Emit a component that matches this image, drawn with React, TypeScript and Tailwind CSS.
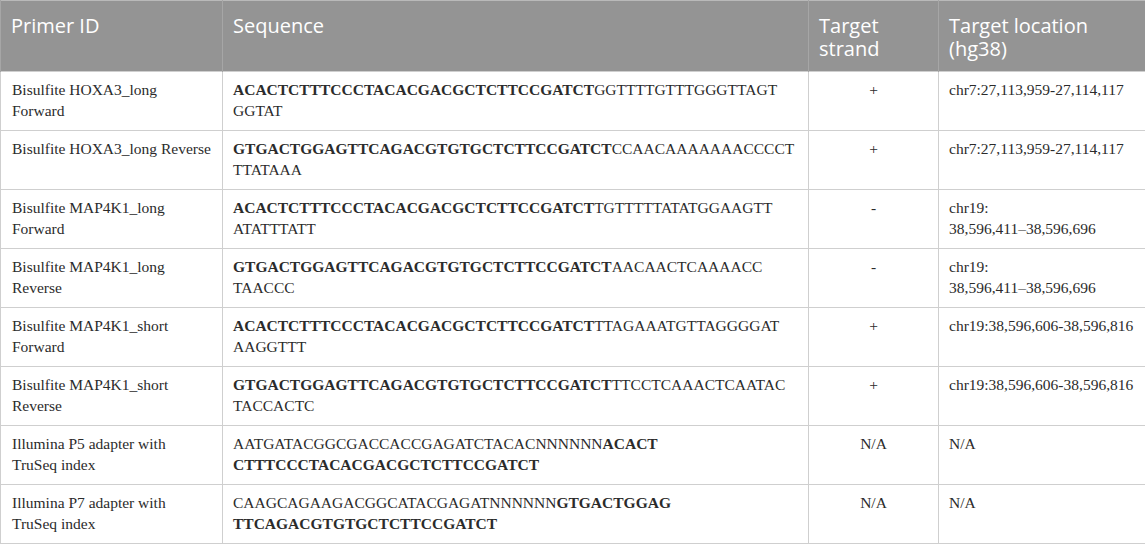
import React from "react";

type Seg = { t: string; b?: boolean };
type Row = {
  id: string[];
  seq: Seg[][];
  strand: string;
  loc: string[];
};

const rows: Row[] = [
  {
    id: ["Bisulfite HOXA3_long", "Forward"],
    seq: [
      [{ t: "ACACTCTTTCCCTACACGACGCTCTTCCGATCT", b: true }, { t: "GGTTTTGTTTGGGTTAGT" }],
      [{ t: "GGTAT" }],
    ],
    strand: "+",
    loc: ["chr7:27,113,959-27,114,117"],
  },
  {
    id: ["Bisulfite HOXA3_long Reverse"],
    seq: [
      [{ t: "GTGACTGGAGTTCAGACGTGTGCTCTTCCGATCT", b: true }, { t: "CCAACAAAAAAACCCCT" }],
      [{ t: "TTATAAA" }],
    ],
    strand: "+",
    loc: ["chr7:27,113,959-27,114,117"],
  },
  {
    id: ["Bisulfite MAP4K1_long", "Forward"],
    seq: [
      [{ t: "ACACTCTTTCCCTACACGACGCTCTTCCGATCT", b: true }, { t: "TGTTTTTATATGGAAGTT" }],
      [{ t: "ATATTTATT" }],
    ],
    strand: "-",
    loc: ["chr19:", "38,596,411–38,596,696"],
  },
  {
    id: ["Bisulfite MAP4K1_long", "Reverse"],
    seq: [
      [{ t: "GTGACTGGAGTTCAGACGTGTGCTCTTCCGATCT", b: true }, { t: "AACAACTCAAAACC" }],
      [{ t: "TAACCC" }],
    ],
    strand: "-",
    loc: ["chr19:", "38,596,411–38,596,696"],
  },
  {
    id: ["Bisulfite MAP4K1_short", "Forward"],
    seq: [
      [{ t: "ACACTCTTTCCCTACACGACGCTCTTCCGATCT", b: true }, { t: "TTAGAAATGTTAGGGGAT" }],
      [{ t: "AAGGTTT" }],
    ],
    strand: "+",
    loc: ["chr19:38,596,606-38,596,816"],
  },
  {
    id: ["Bisulfite MAP4K1_short", "Reverse"],
    seq: [
      [{ t: "GTGACTGGAGTTCAGACGTGTGCTCTTCCGATCT", b: true }, { t: "TTCCTCAAACTCAATAC" }],
      [{ t: "TACCACTC" }],
    ],
    strand: "+",
    loc: ["chr19:38,596,606-38,596,816"],
  },
  {
    id: ["Illumina P5 adapter with", "TruSeq index"],
    seq: [
      [{ t: "AATGATACGGCGACCACCGAGATCTACACNNNNNN" }, { t: "ACACT", b: true }],
      [{ t: "CTTTCCCTACACGACGCTCTTCCGATCT", b: true }],
    ],
    strand: "N/A",
    loc: ["N/A"],
  },
  {
    id: ["Illumina P7 adapter with", "TruSeq index"],
    seq: [
      [{ t: "CAAGCAGAAGACGGCATACGAGATNNNNNN" }, { t: "GTGACTGGAG", b: true }],
      [{ t: "TTCAGACGTGTGCTCTTCCGATCT", b: true }],
    ],
    strand: "N/A",
    loc: ["N/A"],
  },
];

const headers = ["Primer ID", "Sequence", "Target\nstrand", "Target location\n(hg38)"];

export default function App() {
  return (
    <div className="w-[1145px] h-[545px] bg-white overflow-hidden">
      <table className="w-[1145px] table-fixed border-collapse border border-[#b9b9b9]">
        <colgroup>
          <col className="w-[222px]" />
          <col className="w-[586px]" />
          <col className="w-[130px]" />
          <col className="w-[207px]" />
        </colgroup>
        <thead>
          <tr className="h-[71px] bg-[#949494]">
            {headers.map((h, i) => (
              <th
                key={i}
                className="align-top text-left font-normal text-white text-[20px] leading-[23px] px-[10px] pt-[13px] whitespace-pre-line border-l border-r border-[#a6a6a6] font-[family-name:'Open_Sans',sans-serif]"
              >
                {h}
              </th>
            ))}
          </tr>
        </thead>
        <tbody className="font-[family-name:'Liberation_Serif',serif] text-[15.5px] leading-[21px] text-[#2b2b2b]">
          {rows.map((r, i) => (
            <tr key={i} className="h-[59px]">
              <td className="align-top px-[11px] pt-[7px] pb-[9px] border border-[#cfcfcf]">
                {r.id.map((l, j) => (
                  <div key={j} className="whitespace-nowrap">
                    {l}
                  </div>
                ))}
              </td>
              <td className="align-top px-[10px] pt-[7px] pb-[9px] border border-[#cfcfcf]">
                {r.seq.map((line, j) => (
                  <div key={j} className="whitespace-nowrap">
                    {line.map((s, k) =>
                      s.b ? (
                        <b key={k} className="font-bold">
                          {s.t}
                        </b>
                      ) : (
                        <span key={k}>{s.t}</span>
                      )
                    )}
                  </div>
                ))}
              </td>
              <td className="align-top text-center px-[10px] pt-[7px] pb-[9px] border border-[#cfcfcf]">
                {r.strand}
              </td>
              <td className="align-top px-[10px] pt-[7px] pb-[9px] border border-[#cfcfcf]">
                {r.loc.map((l, j) => (
                  <div key={j} className="whitespace-nowrap">
                    {l}
                  </div>
                ))}
              </td>
            </tr>
          ))}
        </tbody>
      </table>
    </div>
  );
}
